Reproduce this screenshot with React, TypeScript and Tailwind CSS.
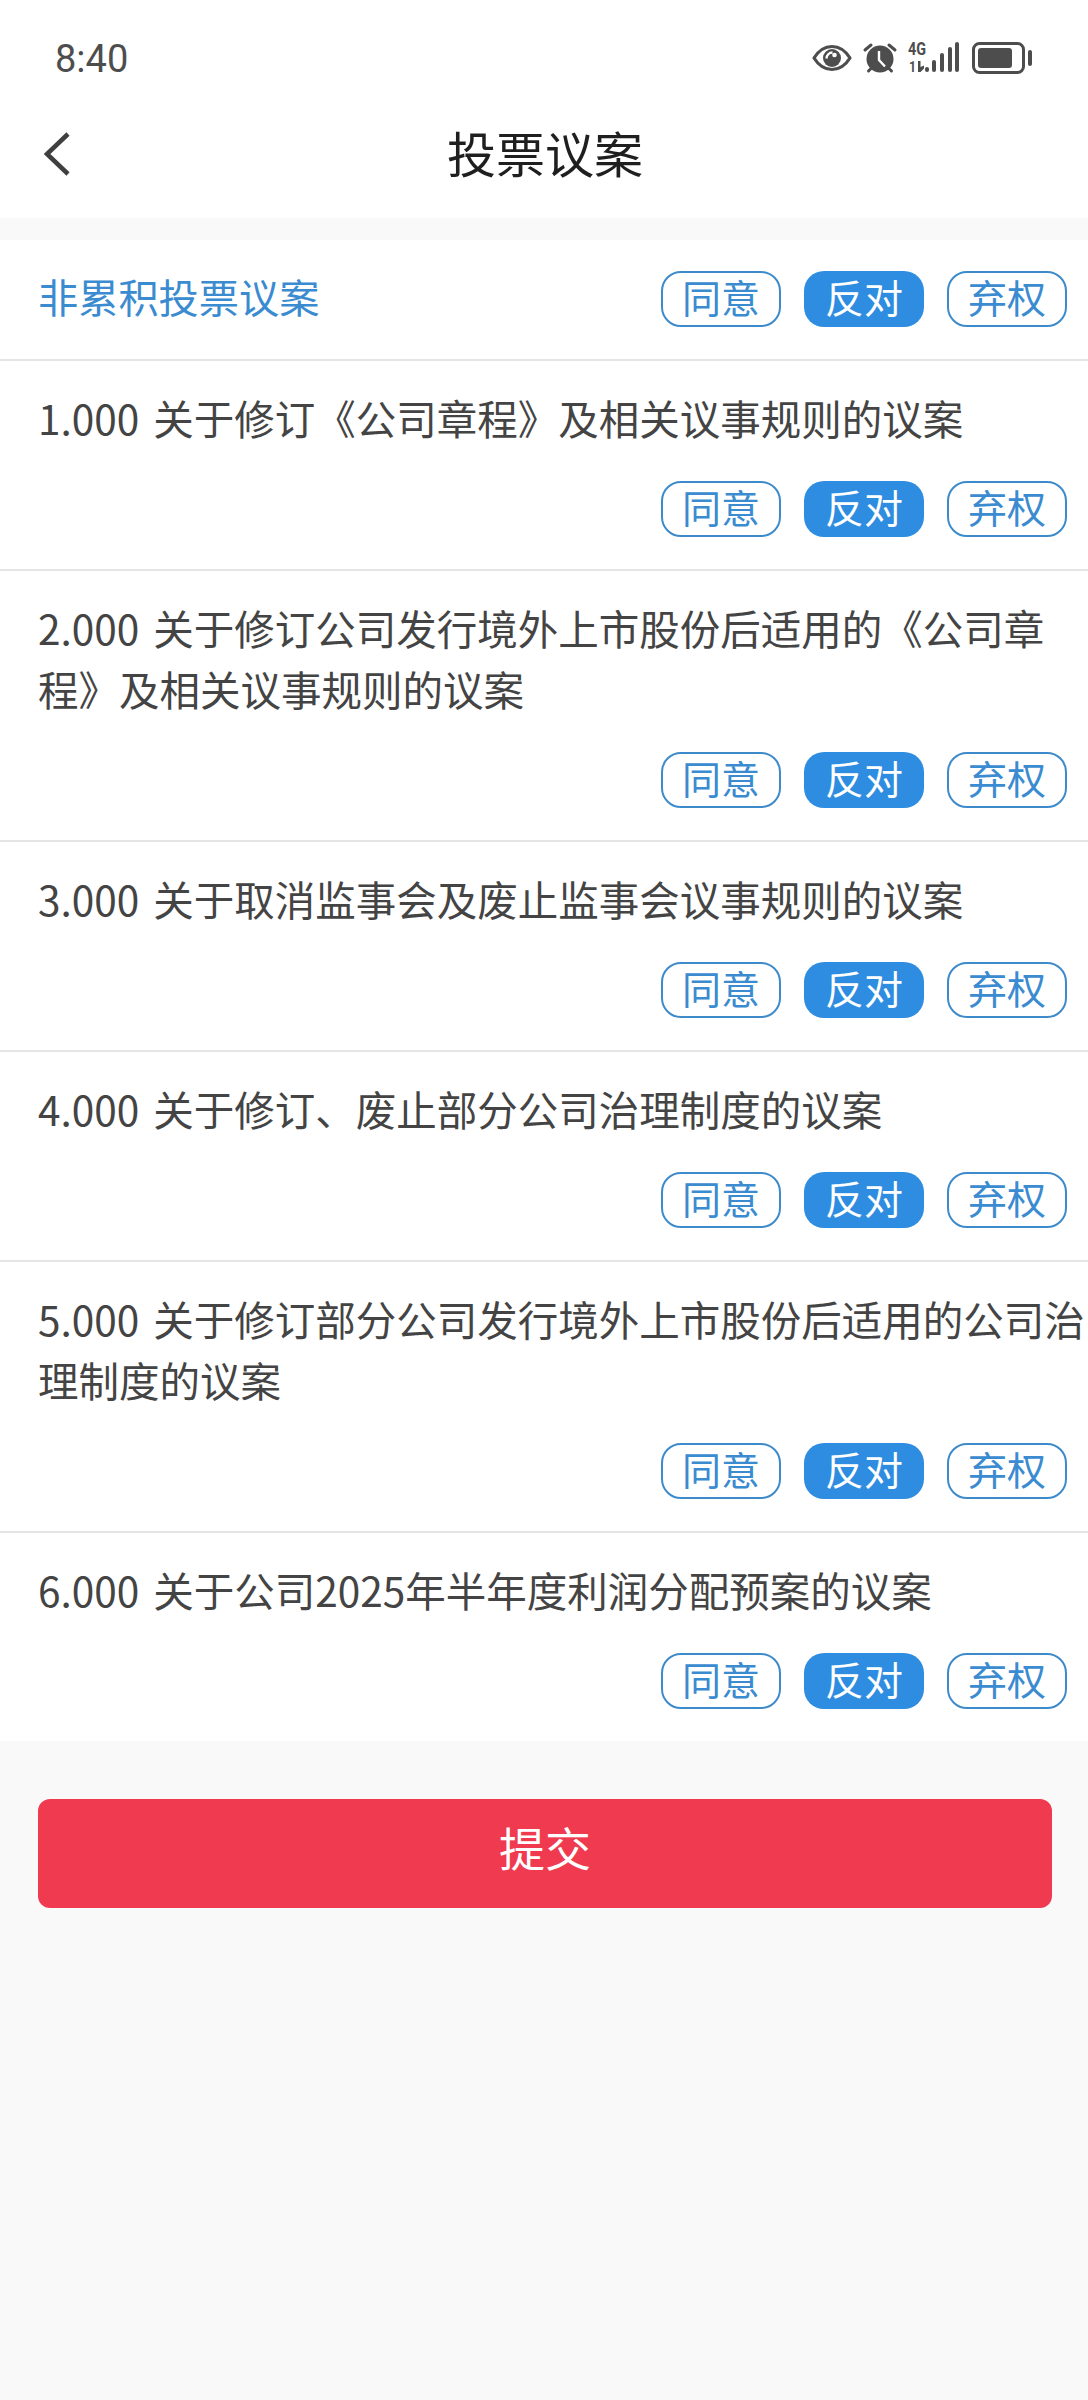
const FONT = "font-['Noto_Sans_CJK_SC','Noto_Sans',sans-serif]";

const PROPOSALS = [
  '1.000 关于修订《公司章程》及相关议事规则的议案',
  '2.000 关于修订公司发行境外上市股份后适用的《公司章程》及相关议事规则的议案',
  '3.000 关于取消监事会及废止监事会议事规则的议案',
  '4.000 关于修订、废止部分公司治理制度的议案',
  '5.000 关于修订部分公司发行境外上市股份后适用的公司治理制度的议案',
  '6.000 关于公司2025年半年度利润分配预案的议案',
];

function VoteButtons() {
  return (
    <div className="flex gap-[23px] shrink-0">
      <div className="w-[120px] h-[56px] flex items-center justify-center rounded-[20px] border-2 border-[#3d8bcb] bg-white text-[#3a8bd0] text-[39px] leading-none pb-[5px]">同意</div>
      <div className="w-[120px] h-[56px] flex items-center justify-center rounded-[20px] bg-[#2e8de0] text-white text-[39px] leading-none pb-[5px]">反对</div>
      <div className="w-[120px] h-[56px] flex items-center justify-center rounded-[20px] border-2 border-[#3d8bcb] bg-white text-[#3a8bd0] text-[39px] leading-none pb-[5px]">弃权</div>
    </div>
  );
}

function StatusIcons() {
  return (
    <div className="flex items-center">
      {/* eye */}
      <svg width="40" height="28" viewBox="0 0 40 28">
        <path d="M2 14C7 6 13 2.5 20 2.5S33 6 38 14c-5 8-11 11.500-18 11.500S7 22 2 14Z" fill="none" stroke="#4d4d4d" strokeWidth="3.200" strokeLinejoin="round" />
        <circle cx="20" cy="14" r="9" fill="#4d4d4d" />
        <path d="M14.500 14.500a6 6 0 0 1 6-6" fill="none" stroke="#fff" strokeWidth="2.400" />
        <circle cx="22.500" cy="11" r="2.300" fill="#fff" />
      </svg>
      {/* alarm */}
      <svg width="36" height="32" viewBox="0 0 36 32" className="ml-[10px]">
        <circle cx="18" cy="17" r="13.500" fill="#4d4d4d" />
        <path d="M3 8 9 3M33 8l-6-5" stroke="#4d4d4d" strokeWidth="3" strokeLinecap="round" />
        <path d="M6.500 29l2.500-2.500M29.500 29 27 26.500" stroke="#4d4d4d" strokeWidth="3" strokeLinecap="round" />
        <path d="M17 9v9l6 6.500" fill="none" stroke="#fff" strokeWidth="2.400" />
      </svg>
      {/* 4G + signal */}
      <svg width="54" height="44" viewBox="0 -6 54 44" className="ml-[9px] -my-[6px]">
        <text x="1" y="13" fontFamily="Roboto, sans-serif" fontWeight="700" fontSize="18" textLength="18" lengthAdjust="spacingAndGlyphs" fill="#4d4d4d">4G</text>
        <text x="2" y="30" fontFamily="Roboto, sans-serif" fontWeight="700" fontSize="14" textLength="7" lengthAdjust="spacingAndGlyphs" fill="#4d4d4d">1</text>
        <path d="M11 19h2.500v6l3.500-1.500v3L13.500 30H11Z" fill="#4d4d4d" />
        <rect x="18" y="25" width="4" height="5" rx="2" fill="#4d4d4d" />
        <rect x="25" y="18" width="4" height="12" rx="2" fill="#4d4d4d" />
        <rect x="33" y="11" width="4" height="19" rx="2" fill="#4d4d4d" />
        <rect x="41" y="5" width="4" height="25" rx="2" fill="#4d4d4d" />
        <rect x="48" y="0" width="4" height="30" rx="2" fill="#4d4d4d" />
      </svg>
      {/* battery */}
      <svg width="60" height="32" viewBox="0 0 60 32" className="ml-[11px]">
        <rect x="1.500" y="1.500" width="50" height="29" rx="6" fill="none" stroke="#4d4d4d" strokeWidth="3" />
        <rect x="6" y="6" width="34" height="20" rx="3" fill="#4d4d4d" />
        <rect x="56" y="8" width="4" height="16" rx="2" fill="#4d4d4d" />
      </svg>
    </div>
  );
}

export default function App() {
  return (
    <div className={`w-[1088px] h-[2400px] bg-[#f9f9f9] ${FONT}`}>
      <div className="bg-white h-[218px]">
        {/* status bar */}
        <div className="h-[90px] flex items-start justify-between pt-[40px] pl-[55px] pr-[56px]">
          <span className="font-['Roboto',sans-serif] text-[38px] leading-[38px] text-[#4d4d4d]">8:40</span>
          <div className="mt-[2px]"><StatusIcons /></div>
        </div>
        {/* nav */}
        <div className="relative h-[128px] flex items-center justify-center">
          <svg width="30" height="46" viewBox="0 0 30 46" className="absolute left-[42px] top-[41px]">
            <path d="M26 3 5 23l21 20" fill="none" stroke="#3f3f3f" strokeWidth="4.500" />
          </svg>
          <h1 className="text-[49px] leading-none text-[#1f1f1f] pb-[6px] pl-[2px]">投票议案</h1>
        </div>
      </div>

      <div className="mt-[22px] bg-white">
        <div className="h-[121px] flex items-center justify-between pl-[38px] pr-[21px] pb-[2px] border-b-2 border-[#e5e5e5]">
          <span className="text-[40.200px] text-[#3a8bd0] leading-none pb-[4px]">非累积投票议案</span>
          <VoteButtons />
        </div>
        {PROPOSALS.map((p, i) => (
          <div key={i} className={`pt-[26px] pb-[32px] ${i < PROPOSALS.length - 1 ? 'border-b-2 border-[#e5e5e5]' : ''}`}>
            <div className="pl-[38px] text-[40.500px] leading-[61px] text-[#444444] [word-spacing:5px]">{p}</div>
            <div className="mt-[33px] flex justify-end pr-[21px]">
              <VoteButtons />
            </div>
          </div>
        ))}
      </div>

      <div className="mt-[58px] ml-[38px] mr-[36px] h-[109px] rounded-[12px] bg-[#f03a50] flex items-center justify-center text-white text-[46px] leading-none pb-[15px]">
        提交
      </div>
    </div>
  );
}
